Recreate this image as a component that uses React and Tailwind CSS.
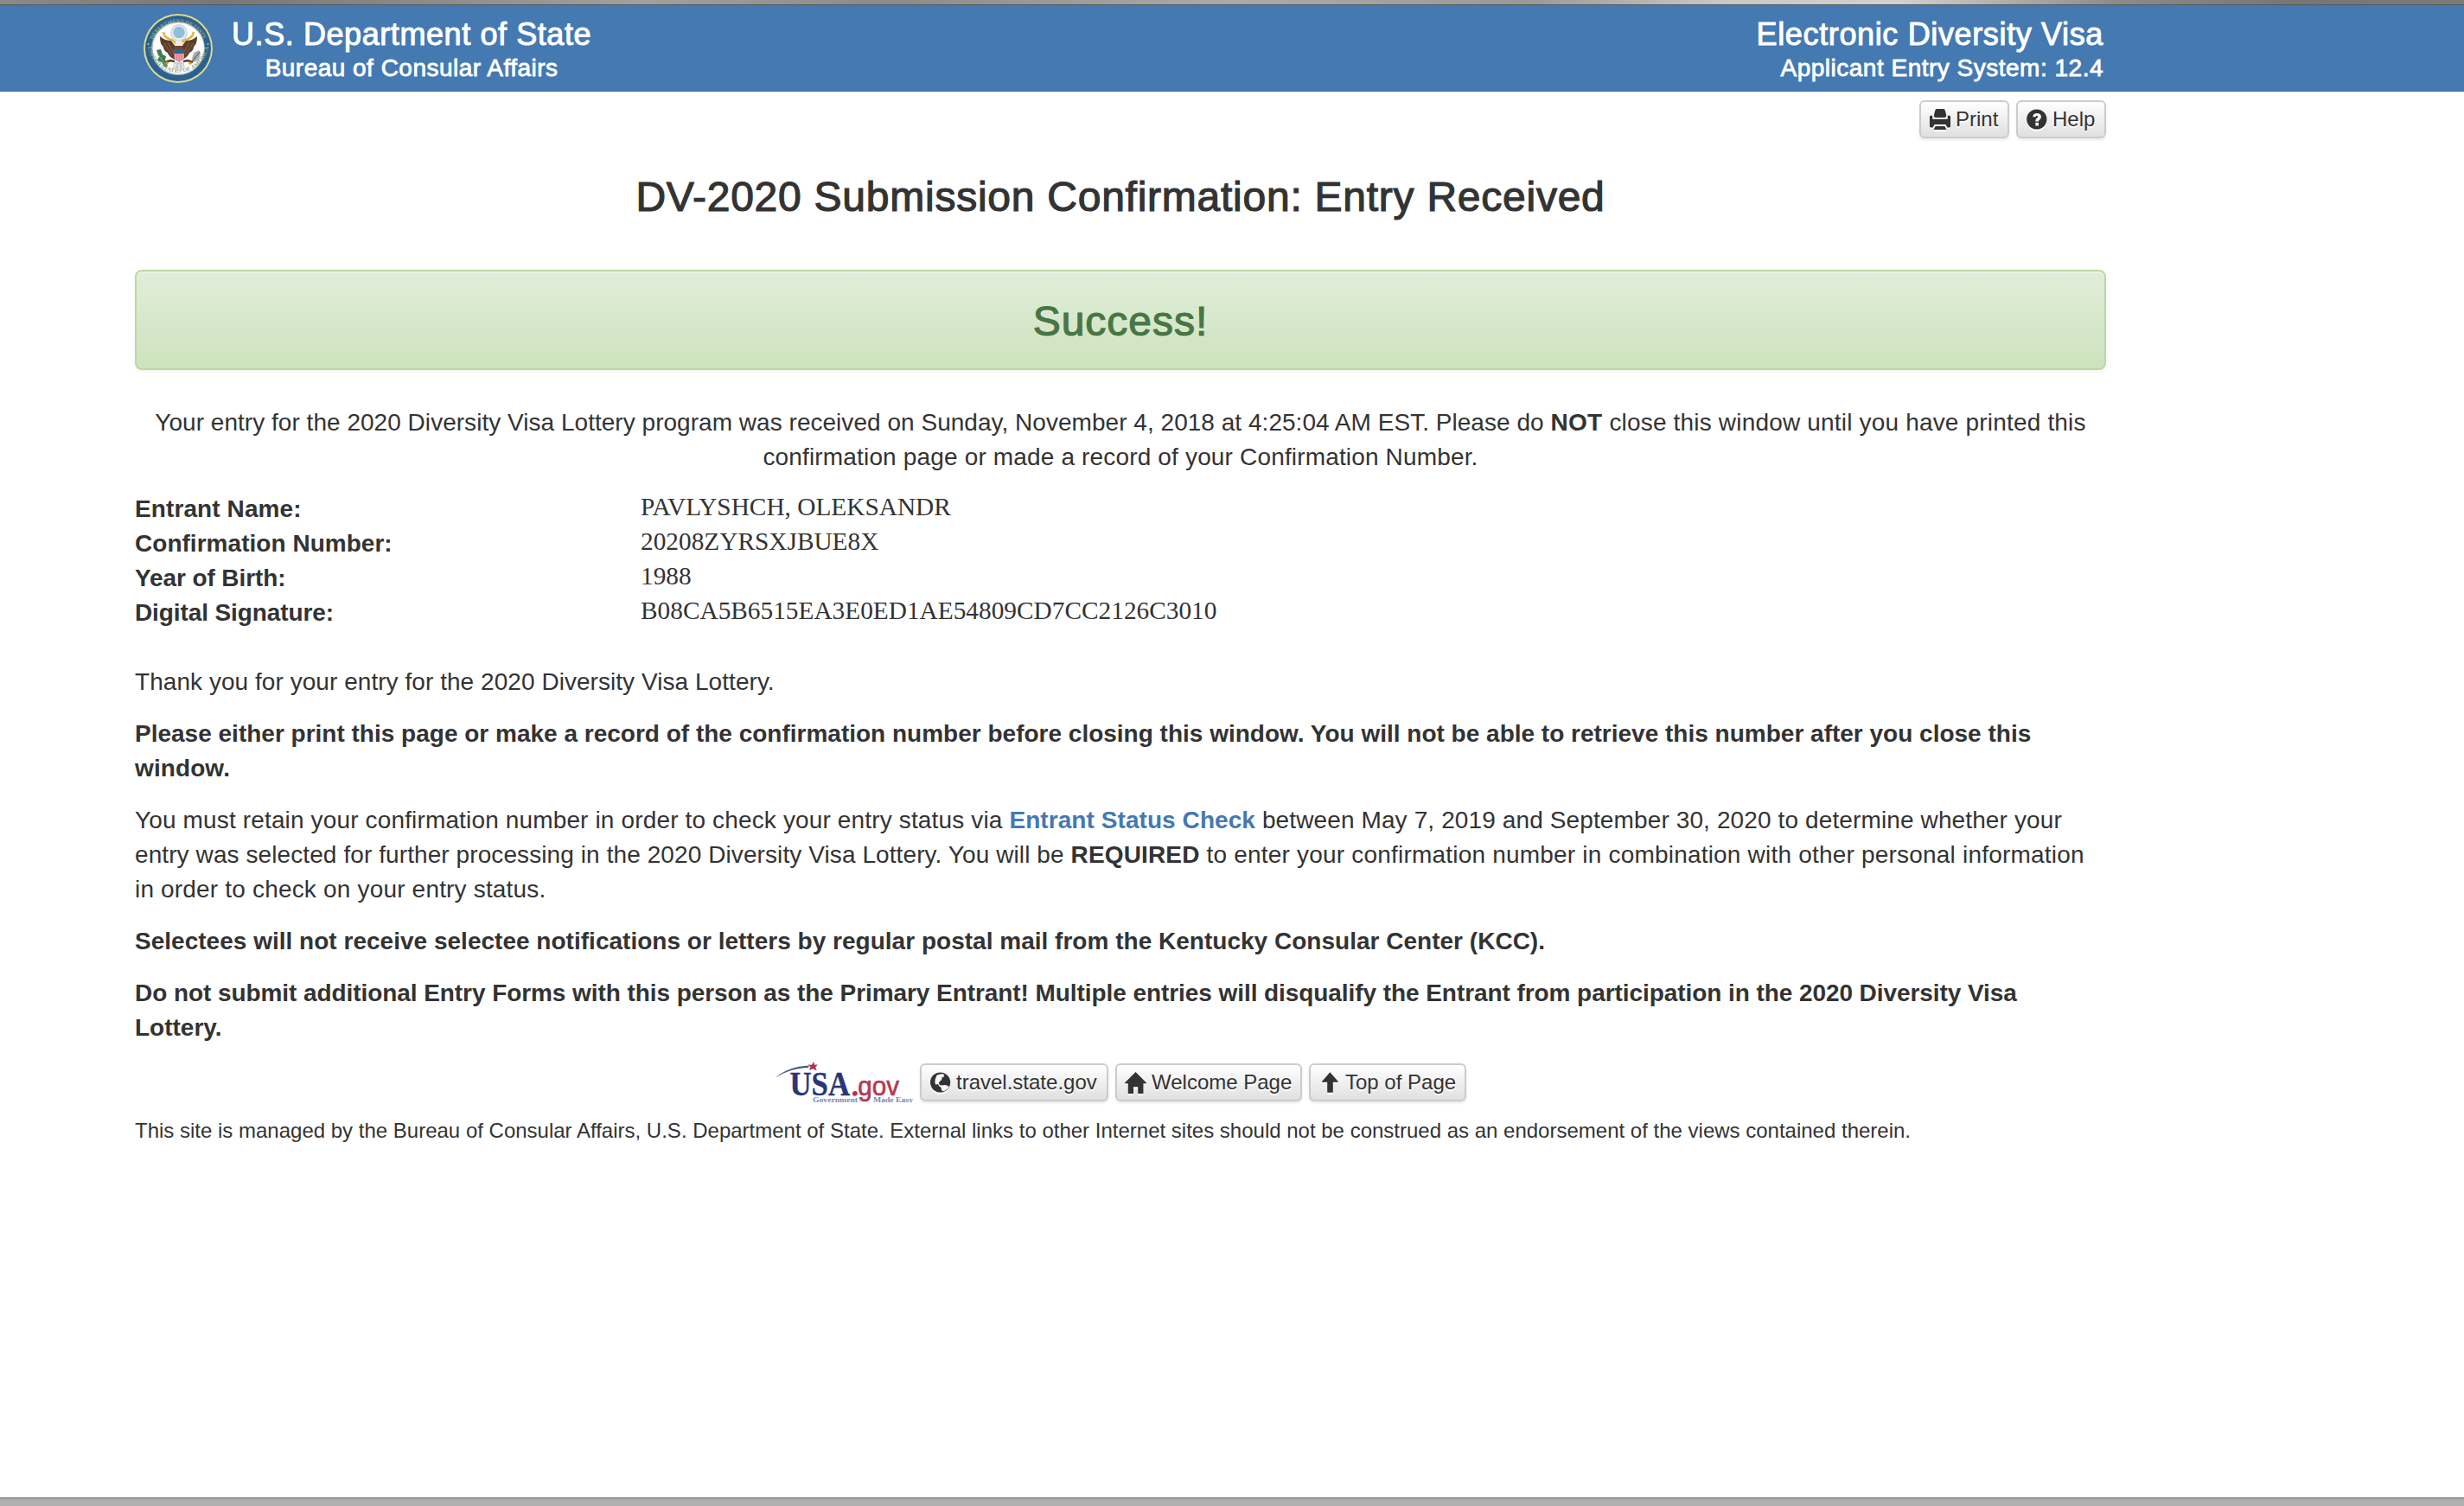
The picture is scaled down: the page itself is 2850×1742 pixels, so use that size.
import React from 'react';

function PrintIcon() {
  return (
    <svg viewBox="0 0 24 24" className="h-6 w-6" fill="#333">
      <path d="M7.6 0h8.8l1.1 1 1.6 5.6v2.2L17.6 10H6.4L5 8.8V6.6L6.5 1z" />
      <path d="M0 8.600l1-.9h2.200v4h17.600v-4H23l1 .9v12l-1 1h-2.600l-2-3.600H5.600l-2 3.600H1l-1-1z" />
      <path d="M6.600 20h10.800l2 4H4.600z" />
    </svg>
  );
}

function HelpIcon() {
  return (
    <svg viewBox="0 0 24 24" className="h-6 w-6">
      <circle cx="11.800" cy="12" r="11.600" fill="#333" />
      <path
        d="M7.300 9.300C7.300 6.500 9.200 5 12 5c2.900 0 4.900 1.500 4.900 4 0 2-1 2.900-2 3.700-.8.600-1 .9-1 1.700h-3.600c0-2 .6-2.900 1.700-3.800.8-.6 1.100-.9 1.100-1.600s-.5-1.100-1.200-1.100c-.8 0-1.200.5-1.300 1.400z"
        fill="#f5f5f5"
      />
      <rect x="10.300" y="15.800" width="3.700" height="3.700" fill="#f5f5f5" />
    </svg>
  );
}

function GlobeIcon() {
  return (
    <svg viewBox="0 0 24 24" className="h-6 w-6">
      <circle cx="11.600" cy="12" r="11.600" fill="#333" />
      <path
        d="M7.500 3.800L11 2.400l4-.2 1.300 1.300-1 .9 1 1-1.500.6-1.300-.5.200 1.800-1 2.200-2 1.600-.8 1.900 1 2 2.800.6 2.500-.7 3.300.6 2.300 1.800c-1.600 2.700-4.200 4.500-7.400 5l-1.500-1.800-.3-2.600-2.400-1.600-1.400-2.600L6.500 15l-1.200-3 .5-4z"
        fill="#f7f7f7"
      />
    </svg>
  );
}

function HomeIcon() {
  return (
    <svg viewBox="0 0 24 24" className="-ml-[1px] h-[25px] w-[25px]" fill="#333">
      <path d="M12 0l12 12v.6h-3.400V24h-6v-7.400h-5V24H3.600V12.600H0V12z" />
    </svg>
  );
}

function ArrowUpIcon() {
  return (
    <svg viewBox="0 0 24 24" className="h-6 w-6" fill="#333">
      <path d="M12.400 .3l9.400 10.700v.8h-6v11.900H9.200V11.800H3v-.8z" />
    </svg>
  );
}

function Button({ className, icon, children }) {
  return (
    <button
      className={`flex h-11 items-center whitespace-nowrap rounded-[6px] border-2 border-[#ccc] bg-linear-to-b from-white to-[#e0e0e0] pl-[10px] text-[24px] leading-[36px] text-[#333] shadow-[0_2px_3px_rgba(0,0,0,0.09)] [text-shadow:0_2px_0_#fff] ${className}`}
    >
      <span className="mr-[6px] flex w-6 shrink-0 items-center [filter:drop-shadow(0_2px_0_#fff)]">{icon}</span>
      {children}
    </button>
  );
}

function Seal() {
  return (
    <svg viewBox="0 0 80 80" className="h-20 w-20">
      <defs>
        <path id="arc-top" d="M8.500 42A31.500 31.500 0 0 1 71.500 42" />
        <path id="arc-bottom" d="M4.500 36A35.700 35.700 0 0 0 75.500 36" />
      </defs>
      <circle cx="40" cy="40" r="40" fill="#dcd98c" />
      <circle cx="40" cy="40" r="38" fill="#2a6191" />
      <circle cx="40" cy="40" r="31" fill="#9db3c6" />
      <circle cx="40.300" cy="40" r="29.800" fill="#fdfdfd" />
      <g fill="#94aa7c" fontFamily="Liberation Serif, serif" fontSize="6.500" fontWeight="700">
        <text>
          <textPath href="#arc-top" startOffset="50%" textAnchor="middle" textLength="74">DEPARTMENT OF STATE</textPath>
        </text>
        <text>
          <textPath href="#arc-bottom" startOffset="50%" textAnchor="middle" textLength="100">UNITED STATES OF AMERICA</textPath>
        </text>
      </g>
      <circle cx="5.500" cy="35" r="1" fill="#c9c98a" />
      <circle cx="74.500" cy="35" r="1" fill="#c9c98a" />
      <circle cx="41" cy="22" r="10" fill="#d4d9dc" />
      <circle cx="41" cy="22" r="8" fill="#eef2f4" />
      <circle cx="41" cy="21.500" r="6.800" fill="#8dc0dd" />
      <path d="M19 26c3 3 8 5 13 5l5 7 1 15c-6-1-9-5-10-8-3-1-5-4-5-7-3-2-4-7-4-12z" fill="#5b3d28" />
      <path d="M62 26c-3 3-8 5-13 5l-5 7-1 15c6-1 9-5 10-8 3-1 5-4 5-7 3-2 4-7 4-12z" fill="#5b3d28" />
      <path d="M24 34l9 14M28 33l7 13M57 34l-9 14M53 33l-7 13" stroke="#8a6a4c" strokeWidth="1" />
      <path d="M23 21c1 5 5 8 9 9 3 1 5 3 6 6M58 21c-1 5-5 8-9 9-3 1-5 3-6 6" fill="none" stroke="#d9b849" strokeWidth="2.600" />
      <path d="M37 33l3.500-3 4 2 1 4-2 4h-5l-2-3z" fill="#f0ece2" />
      <path d="M36 37h9v4h-9z" fill="#6b4b30" />
      <path d="M15 42l5-1 2 6 4 2-1 5 3 6-3 2-4-6-5-2 2-4z" fill="#3f7d4c" />
      <path d="M16 46l10 14" stroke="#8bb08b" strokeWidth="1" />
      <path d="M58 45l6-3 2 4-2 7-6 3-2-4z" fill="#aab0b4" />
      <path d="M54 58l11-14" stroke="#6f7579" strokeWidth="1.500" />
      <path d="M25 56l6-2 5 1M57 56l-6-2-5 1" fill="none" stroke="#5b3d28" strokeWidth="2.400" />
      <circle cx="27" cy="57" r="1.800" fill="#d9952f" />
      <circle cx="54" cy="57" r="1.800" fill="#d9952f" />
      <path d="M36 56l-2 6 6 4h3l5-4-2-6z" fill="#c9cccf" />
      <path d="M37 58l-1 5M41 58v7M45 58l1 5" stroke="#f4f4f4" strokeWidth="1" />
      <path d="M35.500 41h11.500v9c0 3-3 5-5.700 6-2.800-1-5.800-3-5.800-6z" fill="#e89aa5" />
      <path d="M38.500 46v8M41.300 46v9M44.200 46v8" stroke="#d97a88" strokeWidth=".8" />
      <path d="M35.500 41h11.500v5H35.500z" fill="#2f5f93" />
    </svg>
  );
}

function UsaGovLogo() {
  return (
    <svg viewBox="0 0 160 48" className="h-12 w-40">
      <path d="M1 18.500C10 10.500 24 5 40 4.500l-1 2.500C25 7.500 12 11.500 1 18.500z" fill="#4b568f" />
      <path d="M45 0l1.200 3.800L50 3.500l-2.800 2.700 1.500 4.300-4.200-2.200-4.600 1.700 1.600-4L38.500 3.500l4.500.2z" fill="#b5304b" />
      <text x="17.500" y="39" fontFamily="Liberation Serif, serif" fontWeight="700" fontSize="40" fill="#2b3577" stroke="#2b3577" strokeWidth=".4" textLength="69.500" lengthAdjust="spacingAndGlyphs">USA</text>
      <text x="88" y="39" fontFamily="Liberation Sans, sans-serif" fontSize="32" fill="#b23a53" stroke="#b23a53" strokeWidth=".7" textLength="56" lengthAdjust="spacingAndGlyphs">.gov</text>
      <circle cx="93" cy="36.800" r="2.800" fill="#b5304b" />
      <g fontFamily="Liberation Serif, serif" fontSize="9" fontWeight="700" fill="#7d86b3">
        <text x="44" y="46.500" textLength="52" lengthAdjust="spacingAndGlyphs">Government</text>
        <text x="114" y="46.500" textLength="46" lengthAdjust="spacingAndGlyphs">Made Easy</text>
      </g>
    </svg>
  );
}

const entrant = [
  { label: 'Entrant Name:', value: 'PAVLYSHCH, OLEKSANDR', cls: 'tracking-[0.1px]' },
  { label: 'Confirmation Number:', value: '20208ZYRSXJBUE8X', cls: 'tracking-[0.03px]' },
  { label: 'Year of Birth:', value: '1988', cls: 'tracking-[-0.1px]' },
  { label: 'Digital Signature:', value: 'B08CA5B6515EA3E0ED1AE54809CD7CC2126C3010', cls: 'tracking-[-0.1px]' },
];

export default function App() {
  return (
    <div className="flex h-[1742px] w-[2850px] flex-col overflow-hidden bg-white font-['Liberation_Sans',Arial,sans-serif] text-[28px] leading-[40px] text-[#333]">
      <div className="h-[6px] shrink-0 border-b border-[#555b61] bg-[linear-gradient(90deg,#8a8a8a_0%,#777_9%,#a0a0a0_26%,#8b8b8b_36%,#aaa_50%,#999_62%,#c8c8c8_70%,#d0d0d0_77%,#8a8a8a_86%,#767676_93%,#7a7a7a_100%)]" />
      <header className="flex h-[100px] shrink-0 border-b border-[#3f74ab] bg-[#4479b2] text-white">
        <div className="ml-[156px] flex w-[2280px] justify-between pr-[3px]">
          <div className="flex pl-[10px]">
            <div className="pt-[10px]">
              <Seal />
            </div>
            <div className="ml-[22px] flex flex-col items-center whitespace-nowrap pt-[15px]">
              <div className="text-[36px] leading-[38px] tracking-[0.58px] [-webkit-text-stroke:1px]">U.S. Department of State</div>
              <div className="tracking-[0.48px] [-webkit-text-stroke:0.8px]">Bureau of Consular Affairs</div>
            </div>
          </div>
          <div className="flex flex-col items-end whitespace-nowrap pt-[15px]">
            <div className="text-[36px] leading-[38px] tracking-[0.64px] [-webkit-text-stroke:1px]">Electronic Diversity Visa</div>
            <div className="tracking-[0.5px] [-webkit-text-stroke:0.8px]">Applicant Entry System: 12.4</div>
          </div>
        </div>
      </header>

      <main className="ml-[156px] flex w-[2280px] grow flex-col">
        <div className="mt-[10px] flex justify-end gap-2">
          <Button className="w-[104px]" icon={<PrintIcon />}>Print</Button>
          <Button className="w-[104px]" icon={<HelpIcon />}>Help</Button>
        </div>

        <h1 className="mt-[41px] text-center text-[48px] leading-[54px] tracking-[0.75px] [-webkit-text-stroke:1.2px]">
          DV-2020 Submission Confirmation: Entry Received
        </h1>

        <div className="mt-[57px] flex h-[116px] items-center justify-center rounded-[8px] border-2 border-[#b9daa5] bg-linear-to-b from-[#e1eed9] to-[#cde2be] pt-[3px] text-[48px] leading-[54px] tracking-[1px] text-[#487644] shadow-[inset_0_2px_0_rgba(255,255,255,0.25),0_2px_4px_rgba(0,0,0,0.05)] [-webkit-text-stroke:1.2px] [text-shadow:0_2px_0_rgba(255,255,255,0.2)]">
          Success!
        </div>

        <div className="mt-[41px] flex flex-col items-center whitespace-pre">
          <div>
            <span className="tracking-[0.03px]">Your entry for the 2020 Diversity Visa Lottery program was received on Sunday, November 4, 2018 at 4:25:04 AM EST. Please do </span>
            <b className="tracking-[0.3px]">NOT</b>
            <span className="tracking-[0.18px]"> close this window until you have printed this</span>
          </div>
          <div className="tracking-[0.16px]">confirmation page or made a record of your Confirmation Number.</div>
        </div>

        <dl className="mt-5">
          {entrant.map((row) => (
            <div key={row.label} className="flex h-10">
              <dt className={`w-[585px] font-bold ${row.cls}`}>{row.label}</dt>
              <dd className="-mt-[3px] font-['Liberation_Serif','Times_New_Roman',serif] text-[29.33px]">{row.value}</dd>
            </div>
          ))}
        </dl>

        <p className="mt-[40px] tracking-[0.05px]">Thank you for your entry for the 2020 Diversity Visa Lottery.</p>

        <div className="mt-5 whitespace-pre font-bold">
          <div>Please either print this page or make a record of the confirmation number before closing this window. You will not be able to retrieve this number after you close this</div>
          <div className="tracking-[0.1px]">window.</div>
        </div>

        <div className="mt-5 whitespace-pre">
          <div>
            <span className="tracking-[0.145px]">You must retain your confirmation number in order to check your entry status via </span>
            <a className="font-bold tracking-[0.07px] text-[#4479b2]">Entrant Status Check</a>
            <span className="tracking-[0.12px]"> between May 7, 2019 and September 30, 2020 to determine whether your</span>
          </div>
          <div>
            <span className="tracking-[0.09px]">entry was selected for further processing in the 2020 Diversity Visa Lottery. You will be </span>
            <b className="tracking-[0.15px]">REQUIRED</b>
            <span className="tracking-[0.2px]"> to enter your confirmation number in combination with other personal information</span>
          </div>
          <div className="tracking-[0.18px]">in order to check on your entry status.</div>
        </div>

        <p className="mt-5 whitespace-nowrap font-bold tracking-[0.015px]">
          Selectees will not receive selectee notifications or letters by regular postal mail from the Kentucky Consular Center (KCC).
        </p>

        <div className="mt-5 whitespace-pre font-bold">
          <div className="tracking-[-0.07px]">Do not submit additional Entry Forms with this person as the Primary Entrant! Multiple entries will disqualify the Entrant from participation in the 2020 Diversity Visa</div>
          <div>Lottery.</div>
        </div>

        <footer className="mt-[19px]">
          <div className="flex justify-center gap-2">
            <UsaGovLogo />
            <div className="mt-[2px] flex gap-2">
              <Button className="w-[218px]" icon={<GlobeIcon />}>travel.state.gov</Button>
              <Button className="w-[216px]" icon={<HomeIcon />}>Welcome Page</Button>
              <Button className="w-[182px]" icon={<ArrowUpIcon />}>Top of Page</Button>
            </div>
          </div>
          <p className="mt-[15px] whitespace-nowrap text-[24px] leading-[34px]">
            This site is managed by the Bureau of Consular Affairs, U.S. Department of State. External links to other Internet sites should not be construed as an endorsement of the views contained therein.
          </p>
        </footer>
      </main>

      <div className="h-[10px] shrink-0 border-t border-[#7c7c7c] bg-linear-to-b from-[#a0a0a0] to-[#b0b0b0] to-30%" />
    </div>
  );
}
